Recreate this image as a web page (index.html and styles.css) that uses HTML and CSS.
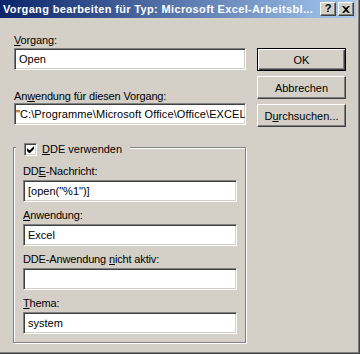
FILE: index.html
```html
<!doctype html>
<html lang="de">
<head>
  <meta charset="utf-8" />
  <title>Vorgang bearbeiten</title>
  <link rel="stylesheet" href="styles.css">
</head>
<body>
  <div class="window">
    <div class="titlebar">
      <span class="title">Vorgang bearbeiten für Typ: Microsoft Excel-Arbeitsbl...</span>
      <div class="capBtns">
        <span class="capBtn help">?</span>
        <span class="capBtn close">
          <svg width="8" height="7" viewBox="0 0 8 7"><path d="M0 0h2l2 2 2-2h2l-3 3.5 3 3.5h-2l-2-2-2 2h-2l3-3.5z" fill="#000"/></svg>
        </span>
      </div>
    </div>

    <div class="body">
      <div class="left">
        <label class="lbl first"><u>V</u>organg:</label>
        <div class="field">Open</div>

        <label class="lbl second">An<u>w</u>endung für diesen Vorgang:</label>
        <div class="field"><span class="path">"C:\Programme\Microsoft Office\Office\EXCEL</span></div>

        <div class="group">
          <div class="legend">
            <span class="check">
              <svg width="7" height="7" viewBox="0 0 7 7"><path d="M0 2v3l2 2h1l4-4v-3l-4 4h-1z" fill="#000"/></svg>
            </span>
            <span><u>D</u>DE verwenden</span>
          </div>

          <label class="lbl">DD<u>E</u>-Nachricht:</label>
          <div class="field">[open("%1")]</div>

          <label class="lbl"><u>A</u>nwendung:</label>
          <div class="field">Excel</div>

          <label class="lbl">DDE-Anwendung <u>n</u>icht aktiv:</label>
          <div class="field"></div>

          <label class="lbl"><u>T</u>hema:</label>
          <div class="field">system</div>
        </div>
      </div>

      <div class="right">
        <button class="btn default" type="button">OK</button>
        <button class="btn" type="button">Abbrechen</button>
        <button class="btn" type="button">D<u>u</u>rchsuchen...</button>
      </div>
    </div>
  </div>
</body>
</html>
```

FILE: styles.css
```css
:root{
  --face:#d4d0c8;
  --light:#ffffff;
  --shadow:#808080;
  --dark:#404040;
}

*{ box-sizing:border-box; }

body{
  margin:0;
  background:var(--face);
  font-family:"Liberation Sans", Arial, sans-serif;
  font-size:11px;
  color:#000;
}

.window{
  width:360px;
  height:354px;
  background:var(--face);
  border-right:1px solid var(--dark);
  border-bottom:1px solid var(--dark);
  box-shadow: inset -1px -1px var(--shadow);
  overflow:hidden;
}

.titlebar{
  height:18px;
  margin-right:3px;
  background:linear-gradient(90deg, #0a246a, #a6caf0);
  display:flex;
  align-items:center;
  justify-content:space-between;
  padding:0 2px 0 3px;
}
.title{
  color:#fff;
  font-weight:bold;
  font-size:11px;
  white-space:nowrap;
  letter-spacing:.35px;
}

.capBtns{
  display:flex;
  gap:2px;
}
.capBtn{
  width:16px;
  height:14px;
  background:var(--face);
  border-top:1px solid var(--light);
  border-left:1px solid var(--light);
  border-right:1px solid var(--dark);
  border-bottom:1px solid var(--dark);
  box-shadow: inset -1px -1px var(--shadow);
  display:grid;
  place-items:center;
  font-weight:bold;
  font-size:11px;
  line-height:1;
}
.capBtn.help{ padding-bottom:1px; }

.body{
  display:flex;
  padding:0 0 0 14px;
}

.left{
  width:232px;
  display:flex;
  flex-direction:column;
}

.lbl{
  display:block;
  height:13px;
  line-height:13px;
  white-space:nowrap;
  letter-spacing:-.15px;
}
.lbl.first{ margin-top:16px; margin-bottom:1px; }
.lbl.second{ margin-top:20px; margin-bottom:0; }

.field{
  height:22px;
  background:#fff;
  border-top:1px solid var(--shadow);
  border-left:1px solid var(--shadow);
  border-right:1px solid var(--light);
  border-bottom:1px solid var(--light);
  box-shadow: inset 1px 1px var(--dark), inset -1px -1px var(--face);
  padding:0 4px;
  line-height:20px;
  white-space:nowrap;
  overflow:hidden;
}
.path{
  display:inline-block;
  margin-left:-3px;
  letter-spacing:.1px;
}

.group{
  position:relative;
  margin:22px 0 0 -1px;
  width:233px;
  height:196px;
  border:1px solid var(--shadow);
  box-shadow: inset 1px 1px var(--light), 1px 1px var(--light);
  padding:13px 8px 0 9px;
  display:flex;
  flex-direction:column;
}
.group .lbl{ margin-top:7px; margin-bottom:2px; }
.group .lbl:first-of-type{ margin-top:4px; }

.legend{
  position:absolute;
  top:-5px;
  left:2px;
  background:var(--face);
  display:flex;
  align-items:center;
  gap:5px;
  padding:0 8px;
  line-height:13px;
}
.check{
  width:13px;
  height:13px;
  background:#fff;
  border-top:1px solid var(--shadow);
  border-left:1px solid var(--shadow);
  border-right:1px solid var(--light);
  border-bottom:1px solid var(--light);
  box-shadow: inset 1px 1px var(--dark), inset -1px -1px var(--face);
  display:grid;
  place-items:center;
}

.right{
  margin-left:11px;
  padding-top:30px;
  display:flex;
  flex-direction:column;
  gap:5px;
}

.btn{
  width:89px;
  height:23px;
  margin:0;
  padding:0;
  font:inherit;
  color:#000;
  background:var(--face);
  border-top:1px solid var(--light);
  border-left:1px solid var(--light);
  border-right:1px solid var(--dark);
  border-bottom:1px solid var(--dark);
  box-shadow: inset -1px -1px var(--shadow);
}
.btn.default{
  border:1px solid #000;
  box-shadow: inset 1px 1px var(--light), inset -1px -1px var(--dark), inset -2px -2px var(--shadow);
}
```
